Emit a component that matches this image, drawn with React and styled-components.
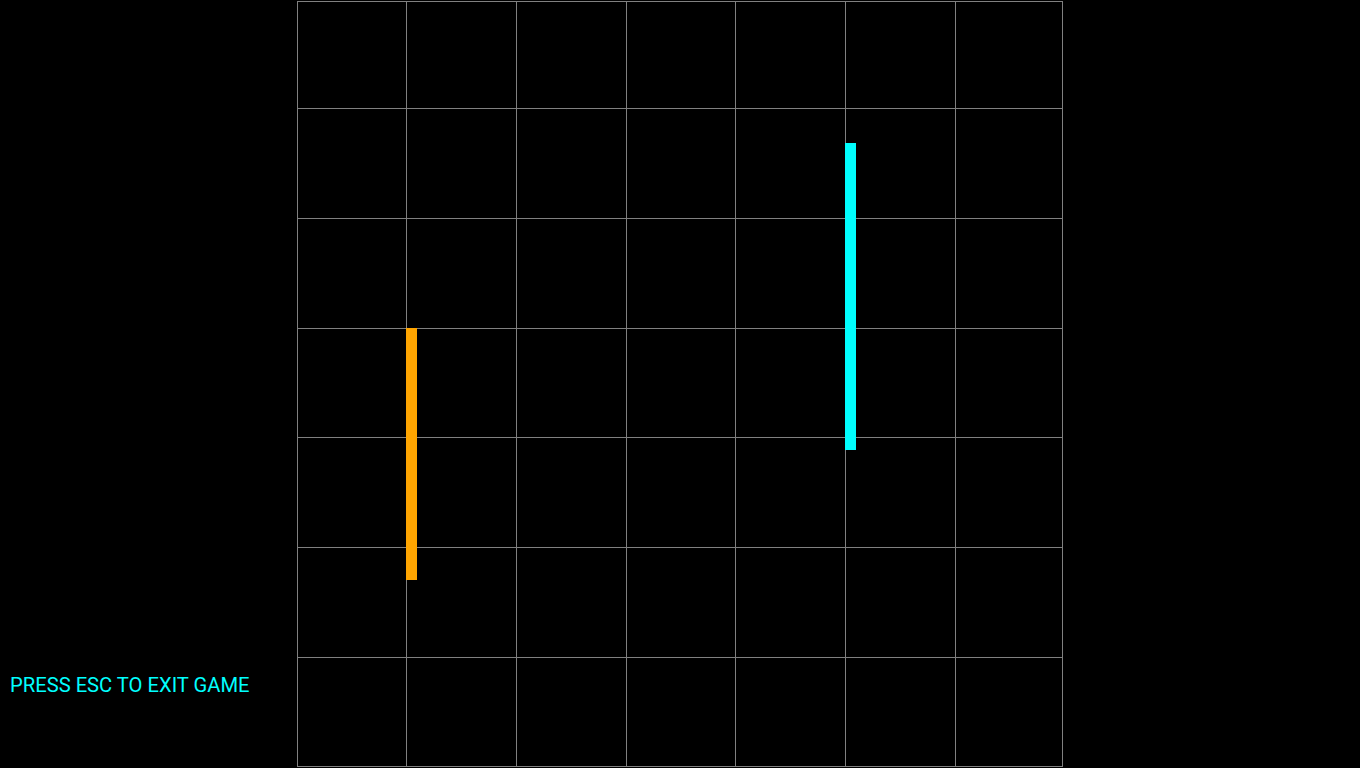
import React from "react";
import styled, { createGlobalStyle } from "styled-components";

const Global = createGlobalStyle`
  html, body { margin: 0; padding: 0; background: #000; overflow: hidden; }
  #root { width: 1360px; height: 768px; }
`;

const Screen = styled.div`
  width: 1360px;
  height: 768px;
  background: #000;
  display: grid;
  grid-template-columns: 296px 768px 1fr;
`;

const Side = styled.div`
  display: flex;
  flex-direction: column;
  justify-content: flex-end;
  padding: 0 0 ${(p) => p.$bottom}px 10px;
`;

const Hint = styled.div`
  font-family: Roboto, "Liberation Sans", sans-serif;
  font-size: 20.2px;
  line-height: 22px;
  color: #00ffff;
  white-space: nowrap;
`;

const Board = styled.svg`
  display: block;
  width: 768px;
  height: 768px;
`;

const cols = [1, 110, 220, 330, 439, 549, 659, 766];
const rows = [1, 108, 218, 328, 437, 547, 657, 766];

const paddles = [
  { x: 110, y: 328, w: 11, h: 252, color: "#ffa500" },
  { x: 549, y: 143, w: 11, h: 307, color: "#00ffff" },
];

export default function App() {
  return (
    <>
      <Global />
      <Screen>
        <Side $bottom={72}>
          <Hint>PRESS ESC TO EXIT GAME</Hint>
        </Side>
        <Board viewBox="0 0 768 768">
          {cols.map((x) => (
            <line key={"c" + x} x1={x + 0.5} y1={1} x2={x + 0.5} y2={767} stroke="#808080" strokeWidth="1" />
          ))}
          {rows.map((y) => (
            <line key={"r" + y} x1={1} y1={y + 0.5} x2={767} y2={y + 0.5} stroke="#808080" strokeWidth="1" />
          ))}
          {paddles.map((p, i) => (
            <rect key={i} x={p.x} y={p.y} width={p.w} height={p.h} fill={p.color} />
          ))}
        </Board>
        <div />
      </Screen>
    </>
  );
}
